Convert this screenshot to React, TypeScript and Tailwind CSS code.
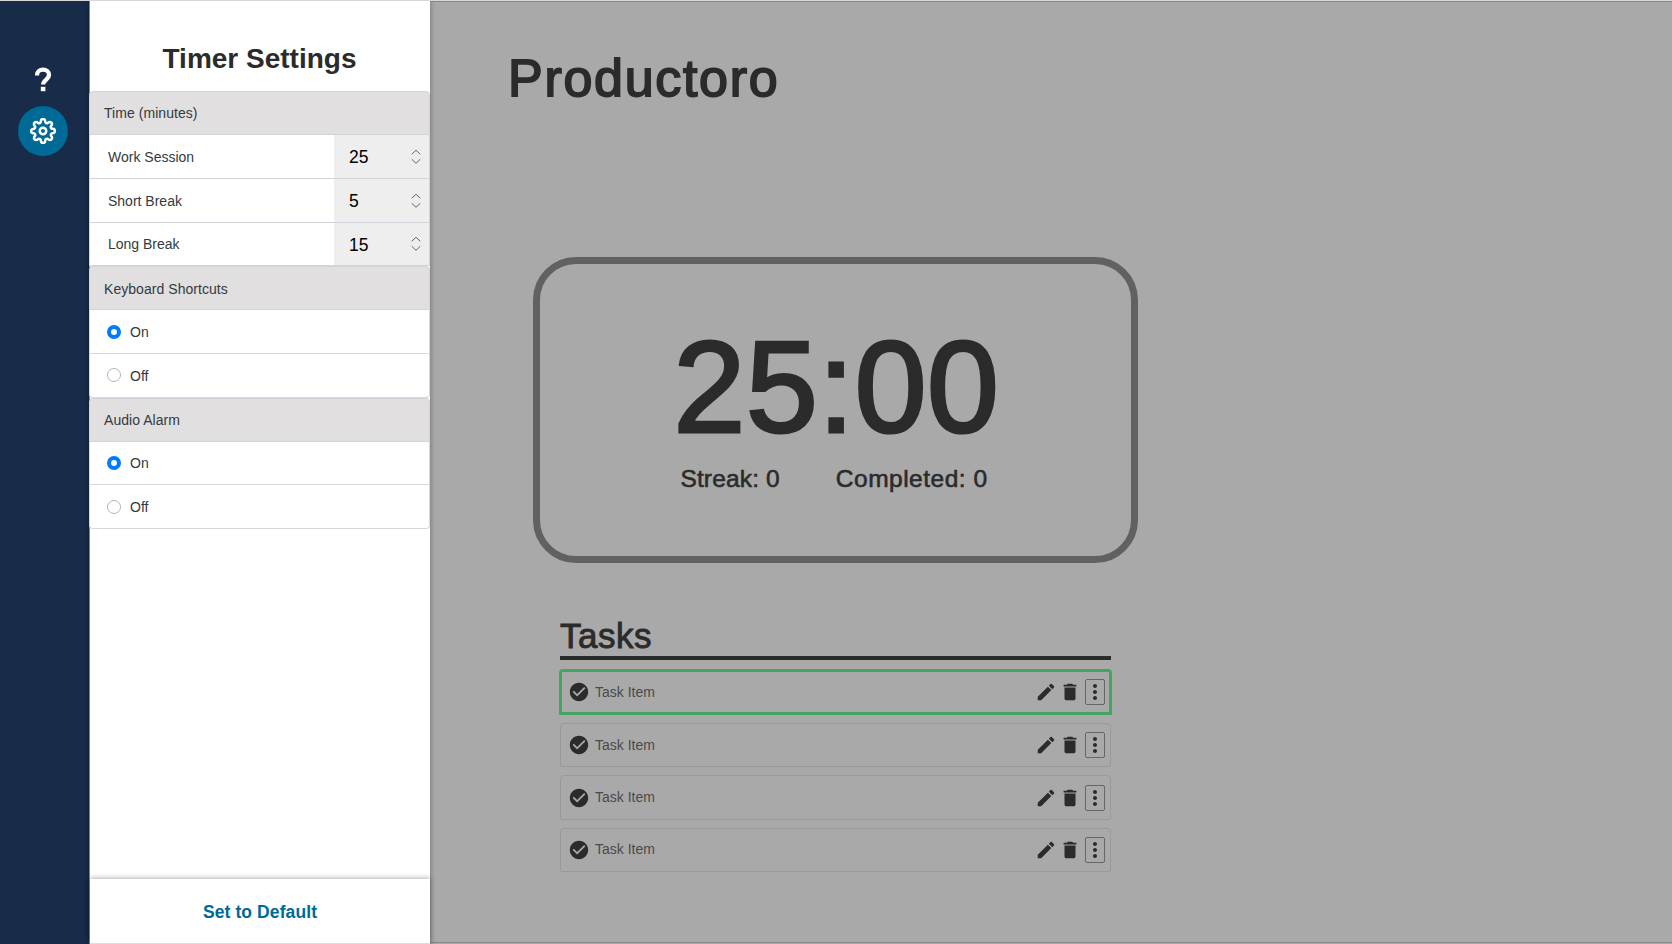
import type { ReactNode } from "react";
import { FiSettings } from "react-icons/fi";
import { MdCheckCircle, MdDelete, MdEdit, MdMoreVert } from "react-icons/md";

const durations = [
  { label: "Work Session", value: 25 },
  { label: "Short Break", value: 5 },
  { label: "Long Break", value: 15 },
];

const tasks = [
  { title: "Task Item", active: true },
  { title: "Task Item", active: false },
  { title: "Task Item", active: false },
  { title: "Task Item", active: false },
];

function Sidebar() {
  return (
    <nav className="flex w-[89px] shrink-0 flex-col items-center bg-[#182b49] pr-[3px] pt-[65px]">
      <button aria-label="Help" className="flex h-[26px] w-5 justify-center">
        <svg width="20" height="26" viewBox="0 0 20 26" fill="none">
          <path
            d="M4.1 9.4V8.8C4.1 5.6 6.5 3.7 10 3.7s6 2 6 5.1c0 2.2-1.2 3.5-3 5-1.9 1.6-2.9 2.6-2.9 4.8"
            stroke="#fff"
            strokeWidth="4.2"
          />
          <path d="M7.8 20.8h4.6V25.2H7.8z" fill="#fff" />
        </svg>
      </button>
      <button
        aria-label="Settings"
        className="mt-[13.5px] flex size-[50px] items-center justify-center rounded-full bg-[#006a96]"
      >
        <FiSettings size={26} color="#fff" strokeWidth={2.3} />
      </button>
    </nav>
  );
}

function GroupHeader({ children }: { children: ReactNode }) {
  return (
    <div className="flex h-[44px] items-center rounded-t-[4px] border border-[#d0d5dc] bg-[#e1dfe0] pl-[14px] pt-[1.5px] tracking-[0.05px]">
      {children}
    </div>
  );
}

function Spinner() {
  return (
    <svg width="10" height="16" viewBox="0 0 10 16" fill="none" stroke="#666" strokeWidth="1">
      <path d="M0.7 5.3 5 1.2l4.3 4.1M0.7 10.2 5 14.3l4.3-4.1" />
    </svg>
  );
}

function DurationRow({ label, value }: { label: string; value: number }) {
  return (
    <div className="flex h-[43.75px] border-x border-b border-[#d0d5dc] bg-white">
      <div className="flex flex-1 items-center pl-[18px] pt-[2px]">{label}</div>
      <div className="flex w-[95px] items-center justify-between bg-[#eee] pl-[15px] pr-[8px] pt-[1px] text-[17.5px] text-black">
        <span className="pt-px">{value}</span>
        <Spinner />
      </div>
    </div>
  );
}

function RadioRow({ label, checked, last }: { label: string; checked?: boolean; last?: boolean }) {
  return (
    <div
      className={
        "flex h-[43.7px] items-center gap-[9px] border-x border-b border-[#d5d9de] bg-white pl-[17px] " +
        (last ? "rounded-b-[4px]" : "")
      }
    >
      <span
        className={
          "size-[14px] rounded-full bg-white " +
          (checked ? "border-[4.3px] border-[#007aff]" : "border border-[#b5b5b5]")
        }
      />
      <span className="pt-[2px]">{label}</span>
    </div>
  );
}

function RadioGroup({ title }: { title: string }) {
  return (
    <section className="-ml-px">
      <GroupHeader>{title}</GroupHeader>
      <RadioRow label="On" checked />
      <RadioRow label="Off" last />
    </section>
  );
}

function SettingsPanel() {
  return (
    <aside className="relative z-10 flex w-[341px] shrink-0 flex-col border-l border-[#76829a] bg-white text-[14px] text-[#343a40] shadow-[0_0_6px_rgba(0,0,0,0.35)]">
      <h2 className="flex h-[90px] items-end justify-center pb-[16px] pr-px text-[28px] font-bold leading-8 text-[#2b2b2b]">
        Timer Settings
      </h2>
      <section className="-ml-px">
        <GroupHeader>Time (minutes)</GroupHeader>
        {durations.map((d) => (
          <DurationRow key={d.label} {...d} />
        ))}
      </section>
      <RadioGroup title="Keyboard Shortcuts" />
      <RadioGroup title="Audio Alarm" />
      <button className="mt-auto h-[65px] border-b border-[#ddd] bg-white pt-[2px] text-[17.5px] font-bold tracking-[0.1px] text-[#006a96] shadow-[0_-1px_5px_rgba(0,0,0,0.3)]">
        Set to Default
      </button>
    </aside>
  );
}

function TimerCard() {
  return (
    <section className="mt-[149px] flex h-[306px] w-[605px] flex-col items-center rounded-[43px] border-[7px] border-[#616161]">
      <div className="mt-[58px] pl-[2px] text-[129px] leading-[131px] tracking-[0.6px] [-webkit-text-stroke:3.2px_#2b2b2b]">
        25:00
      </div>
      <div className="mt-[12px] flex gap-[56px] pr-[3px] text-[24.5px] leading-7 [-webkit-text-stroke:0.6px_#2b2b2b]">
        <span className="tracking-[0.15px]">Streak: 0</span>
        <span className="tracking-[0.5px]">Completed: 0</span>
      </div>
    </section>
  );
}

function TaskRow({ title, active }: { title: string; active: boolean }) {
  return (
    <li
      className={
        "flex items-center rounded-t-[4px] text-[14px] text-[#4a4a4c] " +
        (active
          ? "-mx-px -mt-px h-[46px] border-[3px] border-[#44a563] pl-[6px] pr-[4px]"
          : "h-[44.5px] rounded-b-[2px] border border-[#999] pl-[7px] pr-[5px]")
      }
    >
      <MdCheckCircle size={22} color="#2b2b2b" />
      <span className="ml-[5px] flex-1">{title}</span>
      <MdEdit size={22} color="#2b2b2b" />
      <MdDelete size={22} color="#2b2b2b" className="ml-[2.5px]" />
      <button
        aria-label="More"
        className="ml-[4px] flex h-[26px] w-[20px] items-center justify-center rounded-[2px] border border-[#666]"
      >
        <MdMoreVert size={24} color="#2b2b2b" className="shrink-0" />
      </button>
    </li>
  );
}

function Main() {
  return (
    <main className="mb-px flex-1 border-b border-t border-[#888] bg-[#a9a9a9] pl-[78px] text-[#2b2b2b]">
      <h1 className="pt-[46px] text-[52px] leading-[60px] tracking-[1.7px] [-webkit-text-stroke:1.8px_#2b2b2b]">
        Productoro
      </h1>
      <div className="pl-[25px]">
        <TimerCard />
        <section className="ml-[27px] mt-[55px] w-[551px]">
          <h2 className="h-[42px] border-b-[4px] border-[#2b2b2b] text-[35px] leading-[36px] tracking-[0.5px] [-webkit-text-stroke:0.9px_#2b2b2b]">
            Tasks
          </h2>
          <ul className="mt-[10px] flex flex-col gap-[7.9px]">
            {tasks.map((t, i) => (
              <TaskRow key={i} {...t} />
            ))}
          </ul>
        </section>
      </div>
    </main>
  );
}

export default function App() {
  return (
    <div className="flex h-[944px] w-[1672px] overflow-hidden border-t border-[#d8d8d8] bg-[#a9a9a9] font-['Liberation_Sans',Arial,sans-serif]">
      <Sidebar />
      <SettingsPanel />
      <Main />
    </div>
  );
}
